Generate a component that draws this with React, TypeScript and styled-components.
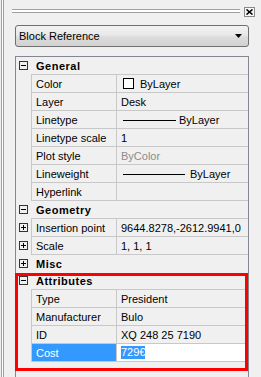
import { createGlobalStyle, styled } from "styled-components";
import type { ReactNode } from "react";

const GlobalStyle = createGlobalStyle`
  html, body {
    margin: 0;
    padding: 0;
    background: #f0f0f0;
  }
  body {
    font-family: "Liberation Sans", Arial, sans-serif;
    font-size: 11px;
    color: #000;
  }
`;

const Window = styled.div`
  display: flex;
  width: 261px;
  height: 377px;
  overflow: hidden;
  background: #f0f0f0;
`;

const Rail = styled.div`
  flex: none;
  width: 6px;
  background: linear-gradient(
    to right,
    #f0f0f0 0 1px,
    #a0a0a0 1px 2px,
    #ffffff 2px 3px,
    #a0a0a0 3px 4px,
    #f0f0f0 4px
  );
`;

const Main = styled.div`
  flex: 1;
  min-width: 0;
  display: flex;
  flex-direction: column;
`;

const TitleBar = styled.div`
  display: flex;
  align-items: flex-start;
  gap: 4px;
  height: 25px;
  box-sizing: border-box;
  padding: 7px 6px 0 6px;
`;

const Grip = styled.div`
  flex: 1;
  height: 4px;
  margin-top: 2px;
  box-sizing: border-box;
  border-top: 1px solid #a0a0a0;
  border-bottom: 1px solid #a0a0a0;
  background: #ffffff;
`;

const CloseButton = styled.div`
  display: flex;
  align-items: center;
  justify-content: center;
  width: 11px;
  height: 10px;
  box-sizing: border-box;
  border: 1px solid #8a8a8a;
  background: #f6f6f6;
`;

const Body = styled.div`
  flex: 1;
  min-height: 0;
  display: flex;
  flex-direction: column;
  padding: 0 12px 0 9px;
`;

const Dropdown = styled.div`
  display: flex;
  align-items: center;
  justify-content: space-between;
  height: 22px;
  box-sizing: border-box;
  margin-bottom: 9px;
  padding: 0 6px 0 3px;
  border: 1px solid #707070;
  border-radius: 3px;
  background: linear-gradient(#f3f3f3, #e8e8e8 45%, #dcdcdc 55%, #d2d2d2);
`;

const Grid = styled.div`
  flex: 1;
  border: 1px solid #828790;
  border-bottom: none;
  background: #f0f0f0;
`;

const Group = styled.div<{ $marked?: boolean }>`
  position: relative;
`;

const Marker = styled.div`
  position: absolute;
  top: 1px;
  left: -1px;
  right: 0;
  height: 98px;
  box-sizing: border-box;
  border: 3px solid #ff0000;
  pointer-events: none;
`;

const CategoryRow = styled.div`
  display: flex;
  align-items: center;
  height: 17px;
`;

const Gutter = styled.div`
  flex: none;
  width: 15px;
  align-self: stretch;
  display: flex;
  align-items: center;
  justify-content: center;
`;

const CategoryTitle = styled.div`
  padding-left: 5px;
  font-weight: bold;
  letter-spacing: 0.5px;
`;

const Toggle = styled.span<{ $open: boolean }>`
  position: relative;
  width: 9px;
  height: 9px;
  box-sizing: border-box;
  border: 1px solid #333;
  &::before {
    content: "";
    position: absolute;
    left: 1px;
    right: 1px;
    top: 3px;
    height: 1px;
    background: #000;
  }
  &::after {
    content: "";
    display: ${({ $open }) => ($open ? "none" : "block")};
    position: absolute;
    top: 1px;
    bottom: 1px;
    left: 3px;
    width: 1px;
    background: #000;
  }
`;

const PropRow = styled.div`
  display: flex;
  height: 18px;
  &:last-child {
    height: 19px;
  }
`;

const NameCell = styled.div<{ $selected?: boolean }>`
  flex: none;
  width: 86px;
  box-sizing: border-box;
  display: flex;
  align-items: center;
  padding-left: 4px;
  border: 1px solid #c8c8c8;
  border-bottom: none;
  background: ${({ $selected }) => ($selected ? "#3399ff" : "transparent")};
  background-clip: padding-box;
  color: ${({ $selected }) => ($selected ? "#ffffff" : "#000000")};
  white-space: nowrap;
  ${PropRow}:last-child & {
    border-bottom: 1px solid #c8c8c8;
  }
`;

const ValueCell = styled.div<{ $editing?: boolean; $muted?: boolean }>`
  flex: 1;
  min-width: 0;
  box-sizing: border-box;
  display: flex;
  align-items: center;
  padding-left: 4px;
  border-top: 1px solid #c8c8c8;
  background: ${({ $editing }) => ($editing ? "#ffffff" : "transparent")};
  background-clip: padding-box;
  color: ${({ $muted }) => ($muted ? "#8b8b8b" : "#000000")};
  white-space: nowrap;
  overflow: hidden;
  ${PropRow}:last-child & {
    border-bottom: 1px solid #c8c8c8;
  }
`;

const Swatch = styled.span`
  flex: none;
  width: 11px;
  height: 11px;
  box-sizing: border-box;
  margin: 0 6px 0 2px;
  border: 1px solid #000;
  background: #ffffff;
`;

const LineSample = styled.span<{ $length: number; $gap: number }>`
  flex: none;
  width: ${({ $length }) => $length}px;
  height: 1px;
  margin: 1px ${({ $gap }) => $gap}px 0 2px;
  background: #000;
`;

const Selection = styled.span`
  line-height: 13px;
  background: #3399ff;
  color: #ffffff;
`;

type Prop = {
  name: string;
  value: ReactNode;
  expandable?: boolean;
  muted?: boolean;
  selected?: boolean;
};

type Category = {
  title: string;
  open: boolean;
  marked?: boolean;
  props: Prop[];
};

const categories: Category[] = [
  {
    title: "General",
    open: true,
    props: [
      { name: "Color", value: <><Swatch />ByLayer</> },
      { name: "Layer", value: "Desk" },
      { name: "Linetype", value: <><LineSample $length={53} $gap={3} />ByLayer</> },
      { name: "Linetype scale", value: "1" },
      { name: "Plot style", value: "ByColor", muted: true },
      { name: "Lineweight", value: <><LineSample $length={62} $gap={5} />ByLayer</> },
      { name: "Hyperlink", value: "" },
    ],
  },
  {
    title: "Geometry",
    open: true,
    props: [
      { name: "Insertion point", value: "9644.8278,-2612.9941,0", expandable: true },
      { name: "Scale", value: "1, 1, 1", expandable: true },
    ],
  },
  { title: "Misc", open: false, props: [] },
  {
    title: "Attributes",
    open: true,
    marked: true,
    props: [
      { name: "Type", value: "President" },
      { name: "Manufacturer", value: "Bulo" },
      { name: "ID", value: "XQ 248 25 7190" },
      { name: "Cost", value: <Selection>729€</Selection>, selected: true },
    ],
  },
];

const App = () => {
  return (
    <Window>
      <GlobalStyle />
      <Rail />
      <Main>
        <TitleBar>
          <Grip />
          <CloseButton>
            <svg width="7" height="6" viewBox="0 0 7 6">
              <path d="M0.5 0.5 L6.5 5.5 M6.5 0.5 L0.5 5.5" stroke="#000" strokeWidth="1.6" />
            </svg>
          </CloseButton>
        </TitleBar>
        <Body>
          <Dropdown>
            <span>Block Reference</span>
            <svg width="7" height="4" viewBox="0 0 7 4">
              <path d="M0 0 H7 L3.5 4 Z" fill="#000" />
            </svg>
          </Dropdown>
          <Grid>
            {categories.map((cat) => (
              <Group key={cat.title}>
                <CategoryRow>
                  <Gutter>
                    <Toggle $open={cat.open} />
                  </Gutter>
                  <CategoryTitle>{cat.title}</CategoryTitle>
                </CategoryRow>
                {cat.open && cat.props.length > 0 && (
                  <div>
                    {cat.props.map((p) => (
                      <PropRow key={p.name}>
                        <Gutter>{p.expandable && <Toggle $open={false} />}</Gutter>
                        <NameCell $selected={p.selected}>{p.name}</NameCell>
                        <ValueCell $editing={p.selected} $muted={p.muted}>
                          {p.value}
                        </ValueCell>
                      </PropRow>
                    ))}
                  </div>
                )}
                {cat.marked && <Marker />}
              </Group>
            ))}
          </Grid>
        </Body>
      </Main>
    </Window>
  );
};

export default App;
